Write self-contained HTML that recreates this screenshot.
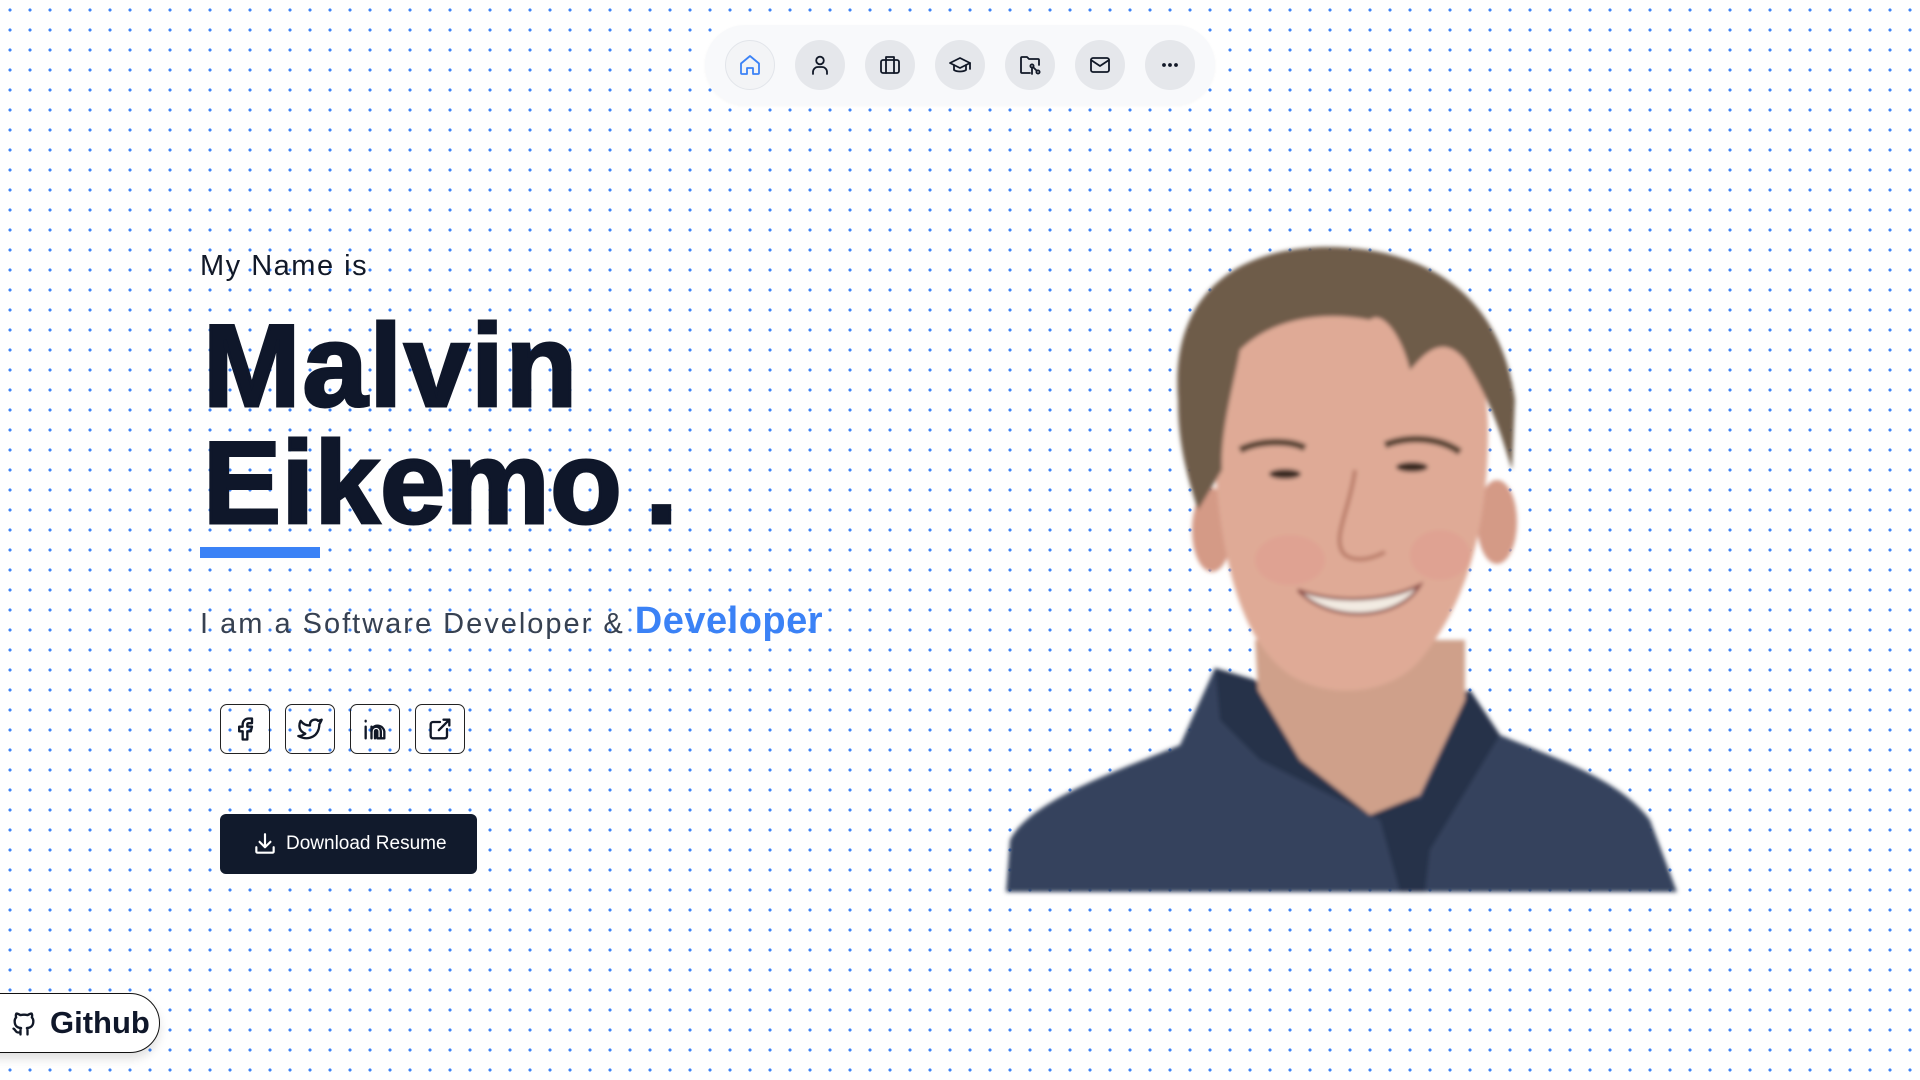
<!DOCTYPE html>
<html><head><meta charset="utf-8"><style>
*{margin:0;padding:0;box-sizing:border-box}
html,body{width:1920px;height:1080px;overflow:hidden}
body{background-color:#fff;background-image:radial-gradient(circle at 10px 10px,#3b82f6 1.4px,transparent 1.8px);background-size:20px 20px;font-family:"Liberation Sans",sans-serif;position:relative;color:#111827}
.nav{position:absolute;left:705px;top:25px;width:510px;height:80px;border-radius:40px;background:#f8f9fb;box-shadow:0 1px 3px rgba(0,0,0,.04)}
.nb{position:absolute;top:15px;width:50px;height:50px;border-radius:50%;background:#e5e7eb;display:flex;align-items:center;justify-content:center}
.nb svg{width:24px;height:24px;fill:none;stroke:#111827;stroke-width:1.8;stroke-linecap:round;stroke-linejoin:round}
.nb.h{background:#f3f4f6;border:1px solid #e2e5ea}
.nb.h svg{stroke:#3b82f6}
.t{position:absolute;white-space:nowrap}
.soc{position:absolute;top:704px;width:50px;height:50px;border:1.5px solid #222;border-radius:7px;display:flex;align-items:center;justify-content:center}
.soc svg{width:28px;height:28px;fill:none;stroke:#111827;stroke-width:2;stroke-linecap:round;stroke-linejoin:round}
.big{font-size:117px;font-weight:bold;line-height:117px;color:#0f172a;-webkit-text-stroke:3px #0f172a}
</style></head><body>
<div class="nav">
<div class="nb h" style="left:20px"><svg viewBox="0 0 24 24"><path d="M3 10.5 12 3l9 7.5V20a1 1 0 0 1-1 1h-5v-6h-6v6H4a1 1 0 0 1-1-1z"/></svg></div>
<div class="nb" style="left:90px"><svg viewBox="0 0 24 24"><circle cx="12" cy="7.5" r="3.8"/><path d="M5 21v-2a5 5 0 0 1 5-5h4a5 5 0 0 1 5 5v2"/></svg></div>
<div class="nb" style="left:160px"><svg viewBox="0 0 24 24"><rect x="3" y="7" width="18" height="13" rx="2"/><path d="M8 7V4h8v3M8 7v13M16 7v13"/></svg></div>
<div class="nb" style="left:230px"><svg viewBox="0 0 24 24"><path d="M2 10 12 5l10 5-10 5z"/><path d="M6 12v5c3 2 9 2 12 0v-5M22 10v6"/></svg></div>
<div class="nb" style="left:300px"><svg viewBox="0 0 24 24"><path d="M12 20H4a1 1 0 0 1-1-1V5a1 1 0 0 1 1-1h5l2 2h9a1 1 0 0 1 1 1v5"/><circle cx="14" cy="13" r="1.6"/><circle cx="20" cy="19" r="1.6"/><path d="M14 14.6V21M15.5 14.5l3 3"/></svg></div>
<div class="nb" style="left:370px"><svg viewBox="0 0 24 24"><rect x="3" y="5" width="18" height="14" rx="2"/><path d="m3 7 9 6 9-6"/></svg></div>
<div class="nb" style="left:440px"><svg viewBox="0 0 24 24"><circle cx="6" cy="12" r="1" fill="#111827"/><circle cx="12" cy="12" r="1" fill="#111827"/><circle cx="18" cy="12" r="1" fill="#111827"/></svg></div>
</div>

<div class="t" style="left:200px;top:250px;font-size:29px;color:#111827;letter-spacing:1.5px">My Name is</div>
<div class="t big" style="left:203px;top:307px;letter-spacing:2px">Malvin</div>
<div class="t big" style="left:203px;top:424px;letter-spacing:.5px;word-spacing:-10px">Eikemo .</div>
<div style="position:absolute;left:200px;top:547px;width:120px;height:11px;background:#3b82f6"></div>
<div class="t" style="left:200px;top:600px;font-size:29px;color:#374151;letter-spacing:2px">I am a Software Developer &amp; <span style="color:#3b82f6;font-weight:bold;font-size:38px;letter-spacing:.5px">Developer</span></div>

<div class="soc" style="left:220px"><svg viewBox="0 0 24 24"><path d="M7 10v4h3v7h4v-7h3l1-4h-4V8a1 1 0 0 1 1-1h3V3h-3a5 5 0 0 0-5 5v2z"/></svg></div>
<div class="soc" style="left:285px"><svg viewBox="0 0 24 24"><path d="M22 4c-1 .5-2 .7-3 1-1.1-1.3-2.8-1.3-4.4-.7S12 6.3 12 8v1c-3.3.1-6.1-1.4-8-4 0 0-4.2 7.5 4 11-1.9 1.3-3.8 2.1-6 2 3.3 1.8 6.8 2.4 9.9 1.5 3.6-1 6.5-3.7 7.6-7.7.3-1.2.5-2.5.5-3.7C20 7.8 21.7 5.3 22 4z"/></svg></div>
<div class="soc" style="left:350px"><svg viewBox="0 0 24 24"><path d="M4 10v10M4 5v.5M9 20V10"/><path d="M9 14a4 4 0 0 1 8 0v6h-3v-6a1 1 0 0 0-2 0v6"/><path d="M17 20h3v-6a6 6 0 0 0-11-2"/></svg></div>
<div class="soc" style="left:415px"><svg viewBox="0 0 24 24"><path d="M12 6H6a2 2 0 0 0-2 2v10a2 2 0 0 0 2 2h10a2 2 0 0 0 2-2v-6M11 13l9-9M15 4h5v5"/></svg></div>

<div style="position:absolute;left:220px;top:814px;width:257px;height:60px;background:#111a2c;border-radius:6px;color:#fff;font-size:19px;display:flex;align-items:center;padding-left:32px">
<svg viewBox="0 0 24 24" width="26" height="26" style="fill:none;stroke:#fff;stroke-width:2;stroke-linecap:round;stroke-linejoin:round;margin-right:8px"><path d="M4 15v4a1 1 0 0 0 1 1h14a1 1 0 0 0 1-1v-4M12 3v12M7 10l5 5 5-5"/></svg>Download Resume</div>

<div style="position:absolute;left:-40px;top:993px;width:200px;height:60px;border:1.5px solid #111;border-radius:0 30px 30px 0;background:#fff;box-shadow:0 6px 10px rgba(0,0,0,.12)"></div>
<svg style="position:absolute;left:10px;top:1009px" width="28" height="30" viewBox="0 0 24 24" fill="none" stroke="#111827" stroke-width="2" stroke-linecap="round" stroke-linejoin="round"><path d="M9 19c-4.3 1.4-4.3-2.5-6-3m12 5v-3.5c0-1 .1-1.4-.5-2 2.8-.3 5.5-1.4 5.5-6a4.6 4.6 0 0 0-1.3-3.2 4.2 4.2 0 0 0-.1-3.2s-1.1-.3-3.5 1.3a12.3 12.3 0 0 0-6.2 0C6.5 2.8 5.4 3.1 5.4 3.1a4.2 4.2 0 0 0-.1 3.2A4.6 4.6 0 0 0 4 9.5c0 4.6 2.7 5.7 5.5 6-.6.6-.6 1.2-.5 2V21"/></svg>
<div class="t" style="left:50px;top:1005px;font-size:31px;font-weight:bold;color:#0f172a">Github</div>

<svg style="position:absolute;left:0;top:0" width="1920" height="1080">
<defs><filter id="b"><feGaussianBlur stdDeviation="2"/></filter></defs>
<g filter="url(#b)">
<path d="M1006 892 L1010 840 C1030 800 1120 770 1180 745 L1215 668 L1255 680 L1340 740 L1440 700 L1470 690 L1500 735 C1560 760 1620 780 1650 820 L1677 892 Z" fill="#36425d"/>
<path d="M1215 668 L1255 680 L1300 760 L1420 800 L1470 690 L1500 735 L1430 850 L1425 892 L1400 892 L1380 820 L1260 760 L1220 720 Z" fill="#27324a"/>
<path d="M1255 640 L1465 640 L1465 700 L1420 795 L1370 815 L1300 760 L1258 690 Z" fill="#cfa08a"/>
<ellipse cx="1212" cy="530" rx="20" ry="42" fill="#d49a86"/>
<ellipse cx="1497" cy="522" rx="20" ry="42" fill="#d49a86"/>
<path d="M1212 420 C1212 330 1270 300 1350 300 C1440 300 1488 340 1488 430 C1488 520 1470 600 1420 660 C1390 695 1330 700 1290 675 C1240 640 1218 560 1212 420 Z" fill="#dfaa96"/>
<ellipse cx="1290" cy="560" rx="35" ry="25" fill="#e09a8e" opacity=".5"/>
<ellipse cx="1440" cy="555" rx="30" ry="25" fill="#e09a8e" opacity=".5"/>
<path d="M1178 400 C1170 300 1230 250 1320 247 C1420 245 1500 290 1515 400 L1512 470 C1500 430 1490 400 1465 360 C1440 330 1420 360 1410 370 C1400 330 1380 310 1370 320 C1320 310 1270 320 1240 350 C1235 380 1220 430 1222 470 L1198 510 C1185 470 1178 440 1178 400 Z" fill="#6e5c48"/>
<path d="M1240 450 C1260 440 1290 440 1305 448" stroke="#5a4434" stroke-width="7" fill="none"/>
<path d="M1385 445 C1410 435 1440 438 1460 452" stroke="#5a4434" stroke-width="7" fill="none"/>
<ellipse cx="1285" cy="474" rx="16" ry="5" fill="#3a2a24"/>
<ellipse cx="1412" cy="467" rx="16" ry="5" fill="#3a2a24"/>
<path d="M1355 470 C1350 510 1330 540 1345 555 C1355 562 1370 560 1385 552" stroke="#b87a68" stroke-width="4" fill="none"/>
<path d="M1298 590 C1340 605 1390 600 1420 585 C1400 620 1330 625 1298 590 Z" fill="#f2ebe2" stroke="#8a4a44" stroke-width="3"/>
</g>
</svg>
</body></html>
